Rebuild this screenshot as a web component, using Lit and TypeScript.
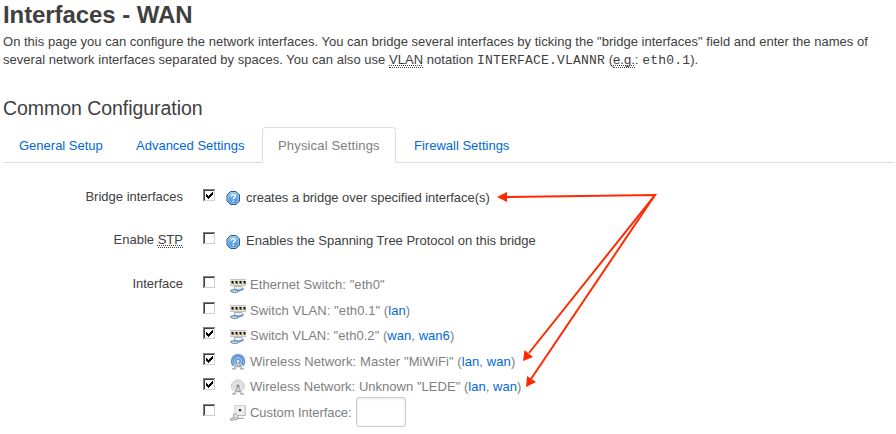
import { LitElement, html, css, svg, nothing } from "lit";
import { customElement, property } from "lit/decorators.js";

const check = svg`<path d="M3 5h1v1h1v1h1v-1h1v-1h1v-1h1v-1h1v3h-1v1h-1v1h-1v1h-1v1h-1v-1h-1v-1h-1z" fill="#000"/>`;

@customElement("classic-checkbox")
class ClassicCheckbox extends LitElement {
  @property({ type: Boolean }) checked = false;
  static styles = css`
    :host { display: block; width: 12px; height: 12px; }
    svg { display: block; }
  `;
  render() {
    return html`<svg width="12" height="12" viewBox="0 0 12 12" shape-rendering="crispEdges">
      <rect width="12" height="12" fill="#d4d0c8"/>
      <path d="M0 0h12v1H1v11H0z" fill="#808080"/>
      <path d="M1 1h10v1H2v9H1z" fill="#404040"/>
      <rect x="2" y="2" width="9" height="9" fill="#fff"/>
      ${this.checked ? check : nothing}
    </svg>`;
  }
}

const helpIcon = svg`
  <defs><linearGradient id="h" x1="0" y1="0" x2="0" y2="1">
    <stop offset="0" stop-color="#9bc9f0"/><stop offset=".5" stop-color="#63a8e4"/><stop offset="1" stop-color="#4692da"/>
  </linearGradient></defs>
  <path d="M5.500 1.500h5.500l3.500 3.500v6l-3.500 3.500h-5.500L2 11V5z" fill="url(#h)" stroke="#2f5680" stroke-linejoin="round"/>
  <path d="M5.900 2.500h4.700l2.900 2.900v5.200l-2.900 2.900H5.900L3 10.600V5.400z" fill="none" stroke="#a6d0f3" stroke-width=".7"/>
  <path d="M6.300 6.500c.1-2.500 4-2.400 3.900-.2 0 1.300-1.900 1.400-1.900 2.900M8.300 10.500v1.500" fill="none" stroke="#fff" stroke-width="1.400"/>`;

const switchIcon = svg`
  <rect x="0" y="2" width="16" height="7" fill="#e0e0e0"/>
  <path d="M0 2.500h16" stroke="#c4c4c4"/>
  <path d="M1 4h3v3H1zM5 4h3v3H5zM9 4h3v3H9zM13 4h3v3h-3z" fill="#77725f"/>
  <path d="M2 4.500h1m3 0h1m3 0h1m3 0h1" stroke="#111"/>
  <path d="M2 5.500h1m3 0h1m3 0h1m3 0h1" stroke="#222"/>
  <path d="M1 6.500h1m3 0h1m3 0h1m3 0h1" stroke="#e3bd32"/>
  <path d="M0 8.500h16" stroke="#c4c4c4"/>
  <path d="M4.500 9.500h7l1.500 1.300-3 2.200H4.500z" fill="#f2f2f2" stroke="#999" stroke-width=".8"/>
  <path d="M.5 13.300 5 12.600l4 .8 5-1.700" stroke="#5c89bc" stroke-width="1.200" fill="none"/>
  <path d="M.5 13.800c2.500 2.400 6 2 8 .3l4.500-1.800" stroke="#6e98c6" stroke-width="1.300" fill="none"/>`;

const wifiIcon = (on: boolean) => {
  const main = on ? "#5c94d0" : "#cdcdcd";
  const pale = on ? "#b5d1ed" : "#ececec";
  return svg`
  <circle cx="8" cy="7" r="6.800" fill="${pale}"/>
  <path d="M3.200 11.700A6.500 6.500 0 1 1 12.800 11.700M4.600 10a4.500 4.500 0 1 1 6.800 0" fill="none" stroke="${main}" stroke-width="${on ? 1.5 : 1}"/>
  <circle cx="8" cy="7" r="2.800" fill="${on ? "#4f8cce" : "#dedede"}"/>
  <path d="M8 7.500 4 14.500h8z" fill="#e9e9e9" fill-opacity=".8"/>
  <path d="M7.600 7.500 4.200 14.500M8.400 7.500l3.400 7M5.500 12.500h5M6.600 10l3.500 2.300" fill="none" stroke="#999" stroke-width=".9"/>
  <path d="M2 14.800h4m4 0h4" stroke="#a0a0a0" stroke-width="1.200"/>
  <circle cx="8" cy="7" r="1.600" fill="${on ? "#d9e6f2" : "#888"}"/>`;
};

const customIcon = svg`
  <rect x="5" y=".5" width="10.200" height="10" fill="#efefef" stroke="#cfcfcf"/>
  <path d="M5.500 10.500h9.800V1" fill="none" stroke="#b5b5b5" stroke-width=".8"/>
  <rect x="8" y="4" width="4" height="3" fill="#ccc"/><rect x="9" y="4" width="2" height="2" fill="#333"/>
  <path d="M3.500 9h3l1.500 1.500v2.500H3.500z" fill="#e2e2e2" stroke="#999" stroke-width=".8"/>
  <path d="M4.500 12.600 .8 13.800v1.400l5-.5 3-1.300h5" fill="none" stroke="#aaa" stroke-width="1.200"/>`;

const icons: Record<string, unknown> = {
  help: helpIcon,
  switch: switchIcon,
  wifi: wifiIcon(true),
  "wifi-off": wifiIcon(false),
  custom: customIcon,
};

@customElement("device-icon")
class DeviceIcon extends LitElement {
  @property() name = "help";
  static styles = css`
    :host { display: block; width: 16px; height: 16px; }
    svg { display: block; }
  `;
  render() {
    return html`<svg width="16" height="16" viewBox="0 0 16 16">${icons[this.name]}</svg>`;
  }
}

const devices = [
  { icon: "switch", text: 'Ethernet Switch: "eth0"', nets: [], on: false, h: 26, track: 0.08 },
  { icon: "switch", text: 'Switch VLAN: "eth0.1"', nets: ["lan"], on: false, h: 25, track: 0.08 },
  { icon: "switch", text: 'Switch VLAN: "eth0.2"', nets: ["wan", "wan6"], on: true, h: 26, track: 0.04 },
  { icon: "wifi", text: 'Wireless Network: Master "MiWiFi"', nets: ["lan", "wan"], on: true, h: 25, track: 0.09 },
  { icon: "wifi-off", text: 'Wireless Network: Unknown "LEDE"', nets: ["lan", "wan"], on: true, h: 26, track: 0.03 },
  { icon: "custom", text: "Custom Interface:", nets: [], on: false, h: 26, track: -0.06 },
];

@customElement("app-root")
class AppRoot extends LitElement {
  static styles = css`
    :host {
      display: block; position: relative; box-sizing: border-box;
      width: 896px; height: 434px; padding: 0 3px; overflow: hidden;
      background: #fff; color: #404040;
      font: 13px/18px "Liberation Sans", Arial, sans-serif;
    }
    h2 { margin: 0; font-size: 24px; line-height: 30px; height: 33px; letter-spacing: -0.08px; }
    p { margin: 0; height: 63px; white-space: nowrap; }
    h3 { margin: 0; font-size: 19.5px; line-height: 24px; height: 31px; font-weight: 400; letter-spacing: -0.05px; }
    code { font: 13px/17px "Liberation Mono", monospace; letter-spacing: 0.2px; }
    abbr {
      text-decoration: underline dotted 1px; text-underline-offset: 1px; text-decoration-skip-ink: none;
      border-bottom: 1px dotted #404040; display: inline-block; line-height: 15px;
    }
    a { color: #0069d6; }
    .l1 { letter-spacing: 0.014px; }
    .l2 { letter-spacing: 0.035px; }
    .tabs { display: flex; gap: 2px; height: 36px; box-sizing: border-box; border-bottom: 1px solid #ddd; width: 891px; }
    .tab { box-sizing: border-box; height: 36px; padding: 0 15px; border: 1px solid transparent; line-height: 35px; white-space: nowrap; }
    .general { width: 115px; }
    .advanced { width: 140px; }
    .active { width: 134px; letter-spacing: 0.16px; color: #808080; border-color: #ddd; border-bottom-color: #fff; background: #fff; border-radius: 4px 4px 0 0; }
    .row { display: flex; height: 43px; }
    .stp { height: 44px; }
    .label { width: 180px; text-align: right; margin-top: -1px; }
    .field { padding-left: 20px; }
    .option { display: flex; align-items: flex-start; white-space: nowrap; }
    .help { margin: 1px 0 0 10px; }
    .stp .help { margin-top: 2px; }
    .hint { margin: 0 0 0 5px; }
    .tight { letter-spacing: -0.045px; }
    .dev { margin: 1px 0 0 15px; }
    .name { margin: 0 0 0 4px; color: #808080; }
    .box { margin: -7px 0 0 4px; width: 50px; height: 30px; box-sizing: border-box; border: 1px solid #ccc; border-radius: 3px; background: #fff; box-shadow: inset 0 1px 3px rgba(0,0,0,.1); padding: 4px; }
    .first { margin-top: 26px; }
    .arrows { position: absolute; left: 0; top: 0; pointer-events: none; }
  `;

  render() {
    return html`
      <h2>Interfaces - WAN</h2>
      <p>
        <span class="l1">On this page you can configure the network interfaces. You can bridge several interfaces by ticking the "bridge interfaces" field and enter the names of</span><br>
        <span class="l2">several network interfaces separated by spaces. You can also use <abbr>VLAN</abbr> notation <code>INTERFACE.VLANNR</code> (<abbr>e.g.</abbr>: <code>eth0.1</code>).</span>
      </p>
      <h3>Common Configuration</h3>
      <nav class="tabs">
        <a class="tab general">General Setup</a><a class="tab advanced">Advanced Settings</a><a class="tab active">Physical Settings</a><a class="tab">Firewall Settings</a>
      </nav>
      <div class="row first">
        <div class="label">Bridge interfaces</div>
        <div class="field option"><classic-checkbox checked></classic-checkbox><device-icon class="help" name="help"></device-icon><span class="hint tight">creates a bridge over specified interface(s)</span></div>
      </div>
      <div class="row stp">
        <div class="label">Enable <abbr>STP</abbr></div>
        <div class="field option"><classic-checkbox></classic-checkbox><device-icon class="help" name="help"></device-icon><span class="hint">Enables the Spanning Tree Protocol on this bridge</span></div>
      </div>
      <div class="row">
        <div class="label">Interface</div>
        <div class="field">
          ${devices.map((d) => html`
            <div class="option" style="height:${d.h}px">
              <classic-checkbox ?checked=${d.on}></classic-checkbox>
              <device-icon class="dev" name=${d.icon}></device-icon>
              <span class="name" style="letter-spacing:${d.track}px">${d.text}${d.nets.length
                ? html` (${d.nets.map((n, i) => html`${i ? ", " : ""}<a>${n}</a>`)})`
                : nothing}</span>
              ${d.icon === "custom" ? html`<input class="box" type="text">` : nothing}
            </div>`)}
        </div>
      </div>
      <svg class="arrows" width="896" height="434">
        <g stroke="#ff2a00" stroke-width="2" fill="none">
          <path d="M506 197 655 195 529 353"/><path d="M655 195 531 379"/>
        </g>
        <g fill="#ff2a00">
          <path d="M497 197 507 192v10z"/><path d="M523 361 524.500 350 533 357z"/><path d="M526 387 527 376 536 382z"/>
        </g>
      </svg>`;
  }
}
